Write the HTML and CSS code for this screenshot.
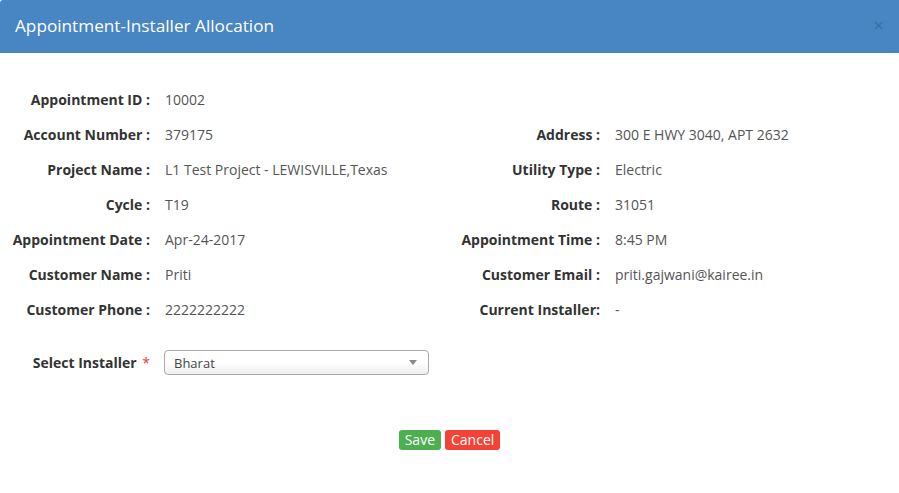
FILE: index.html
```html
<!DOCTYPE html>
<html lang="en">
<head>
    <meta charset="UTF-8">
    <title>Appointment-Installer Allocation</title>
    <link rel="stylesheet" href="styles.css">
</head>
<body>
    <div class="modal">
        <div class="modal-header">
            <div class="modal-title">Appointment-Installer Allocation</div>
            <span class="close">&times;</span>
        </div>

        <div class="modal-body">
            <div class="details">
                <div class="field">
                    <label>Appointment ID :</label>
                    <span>10002</span>
                </div>
                <div class="field"></div>

                <div class="field">
                    <label>Account Number :</label>
                    <span>379175</span>
                </div>
                <div class="field">
                    <label>Address :</label>
                    <span>300 E HWY 3040, APT 2632</span>
                </div>

                <div class="field">
                    <label>Project Name :</label>
                    <span>L1 Test Project - LEWISVILLE,Texas</span>
                </div>
                <div class="field">
                    <label>Utility Type :</label>
                    <span>Electric</span>
                </div>

                <div class="field">
                    <label>Cycle :</label>
                    <span>T19</span>
                </div>
                <div class="field">
                    <label>Route :</label>
                    <span>31051</span>
                </div>

                <div class="field">
                    <label>Appointment Date :</label>
                    <span>Apr-24-2017</span>
                </div>
                <div class="field">
                    <label>Appointment Time :</label>
                    <span>8:45 PM</span>
                </div>

                <div class="field">
                    <label>Customer Name :</label>
                    <span>Priti</span>
                </div>
                <div class="field">
                    <label>Customer Email :</label>
                    <span>priti.gajwani@kairee.in</span>
                </div>

                <div class="field">
                    <label>Customer Phone :</label>
                    <span>2222222222</span>
                </div>
                <div class="field">
                    <label>Current Installer:</label>
                    <span>-</span>
                </div>
            </div>

            <div class="field select-field">
                <label for="installer">Select Installer <em class="required">*</em></label>
                <div class="select-box" id="installer">
                    <span>Bharat</span>
                    <b class="arrow"></b>
                </div>
            </div>

            <div class="buttons">
                <button class="save">Save</button>
                <button class="cancel">Cancel</button>
            </div>
        </div>
    </div>
</body>
</html>
```

FILE: styles.css
```css
* {
    margin: 0;
    padding: 0;
    box-sizing: border-box;
}

body {
    font-family: 'Open Sans', 'Liberation Sans', sans-serif;
    font-size: 14px;
    color: #555555;
    background-color: #ffffff;
}

.modal {
    width: 899px;
    height: 493px;
    background-color: #ffffff;
}

.modal-header {
    height: 53px;
    background-color: #4785c3;
    border-top-left-radius: 3px;
    display: flex;
    align-items: center;
    justify-content: space-between;
    padding: 0 15px 0 15px;
}

.modal-title {
    color: #ffffff;
    font-size: 17.2px;
    line-height: 20px;
    padding-bottom: 2px;
}

.close {
    color: #2f5e8c;
    opacity: 0.55;
    font-size: 19px;
    line-height: 20px;
    padding-bottom: 4px;
}

.modal-body {
    padding: 37px 0 0 0;
}

.details {
    display: grid;
    grid-template-columns: 450px 449px;
    row-gap: 15px;
}

.field {
    display: grid;
    grid-template-columns: 150px 1fr;
    column-gap: 15px;
    line-height: 20px;
    min-height: 20px;
}

.field label {
    text-align: right;
    font-weight: bold;
    color: #333333;
}

.select-field {
    margin-top: 30px;
    grid-template-columns: 150px 265px;
    column-gap: 14px;
    align-items: center;
}

.required {
    font-style: normal;
    color: #e53935;
    font-weight: normal;
    margin-left: 2px;
}

.select-box {
    height: 25px;
    border: 1px solid #aaaaaa;
    border-radius: 4px;
    background: linear-gradient(#ffffff 0%, #ffffff 50%, #eeeeee 100%);
    display: flex;
    align-items: center;
    justify-content: space-between;
    padding: 0 11px 0 9px;
    color: #444444;
}

.select-box span {
    font-size: 13px;
}

.arrow {
    width: 0;
    height: 0;
    border-left: 4px solid transparent;
    border-right: 4px solid transparent;
    border-top: 5px solid #888888;
}

.buttons {
    display: flex;
    justify-content: center;
    gap: 4px;
    margin-top: 55px;
}

button {
    font-family: inherit;
    font-size: 14px;
    line-height: 18px;
    padding: 1px 6px;
    color: #ffffff;
    border: none;
    border-radius: 3px;
}

button.save {
    background-color: #4caf50;
}

button.cancel {
    background-color: #f44336;
}
```
